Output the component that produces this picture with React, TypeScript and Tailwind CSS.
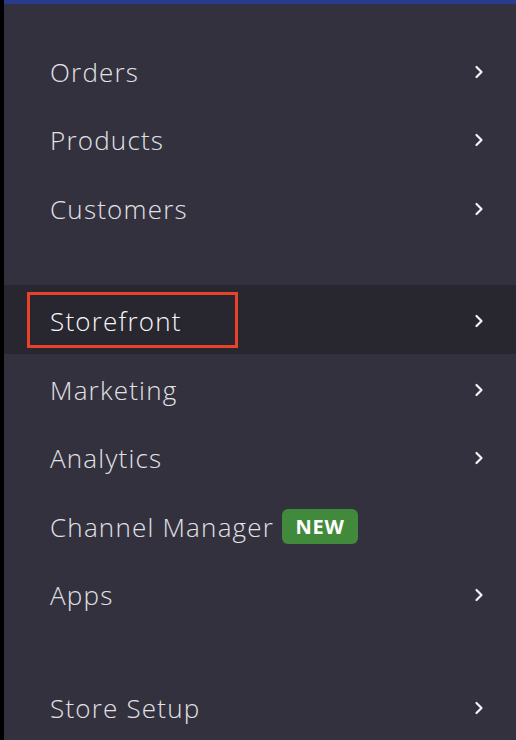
import React from 'react';

interface NavItem {
  label: string;
  chevron?: boolean;
  badge?: string;
  active?: boolean;
}

const sections: NavItem[][] = [
  [
    { label: 'Orders', chevron: true },
    { label: 'Products', chevron: true },
    { label: 'Customers', chevron: true },
  ],
  [
    { label: 'Storefront', chevron: true, active: true },
    { label: 'Marketing', chevron: true },
    { label: 'Analytics', chevron: true },
    { label: 'Channel Manager', badge: 'NEW' },
    { label: 'Apps', chevron: true },
  ],
  [{ label: 'Store Setup', chevron: true }],
];

const Chevron = () => (
  <svg width="10" height="14" viewBox="0 0 10 14" fill="none" className="shrink-0">
    <path d="M2.5 2 L7.5 7 L2.5 12" stroke="#f3f3f5" strokeWidth="2.2" strokeLinecap="round" strokeLinejoin="round" />
  </svg>
);

const Row: React.FC<{ item: NavItem }> = ({ item }) => (
  <div
    className={`relative flex h-[68.5px] items-center justify-between pl-[46px] pr-[32px] pt-[4px] ${
      item.active ? 'bg-[#28272f]' : ''
    }`}
  >
    {/* highlight box drawn over the active item */}
    {item.active && (
      <div className="pointer-events-none absolute left-[23px] top-[7px] h-[56px] w-[211px] border-[3px] border-[#e8432a]" />
    )}
    <div className="flex items-center gap-[8px]">
      <span
        className={`text-[26px] font-light leading-none tracking-[1.2px] ${
          item.active ? 'text-[#f7f7f9]' : 'text-[#e2e2e6]'
        }`}
      >
        {item.label}
      </span>
      {item.badge && (
        <span className="flex h-[35px] w-[76px] items-center justify-center rounded-[6px] bg-[#418a3c] text-[20px] font-bold leading-none tracking-[0.8px] text-white">
          {item.badge}
        </span>
      )}
    </div>
    {item.chevron && <Chevron />}
  </div>
);

export default function App() {
  return (
    <div
      className="flex h-[740px] w-[516px] overflow-hidden bg-black"
      style={{ fontFamily: '"Open Sans", "Noto Sans", sans-serif' }}
    >
      <div className="ml-[4px] flex flex-1 flex-col bg-[#33313e]">
        <div className="h-[7px] bg-[#283b8c]" />
        <nav className="flex flex-col gap-[44px] pt-[32px]">
          {sections.map((section, i) => (
            <div key={i} className="flex flex-col">
              {section.map((item) => (
                <Row key={item.label} item={item} />
              ))}
            </div>
          ))}
        </nav>
      </div>
    </div>
  );
}
